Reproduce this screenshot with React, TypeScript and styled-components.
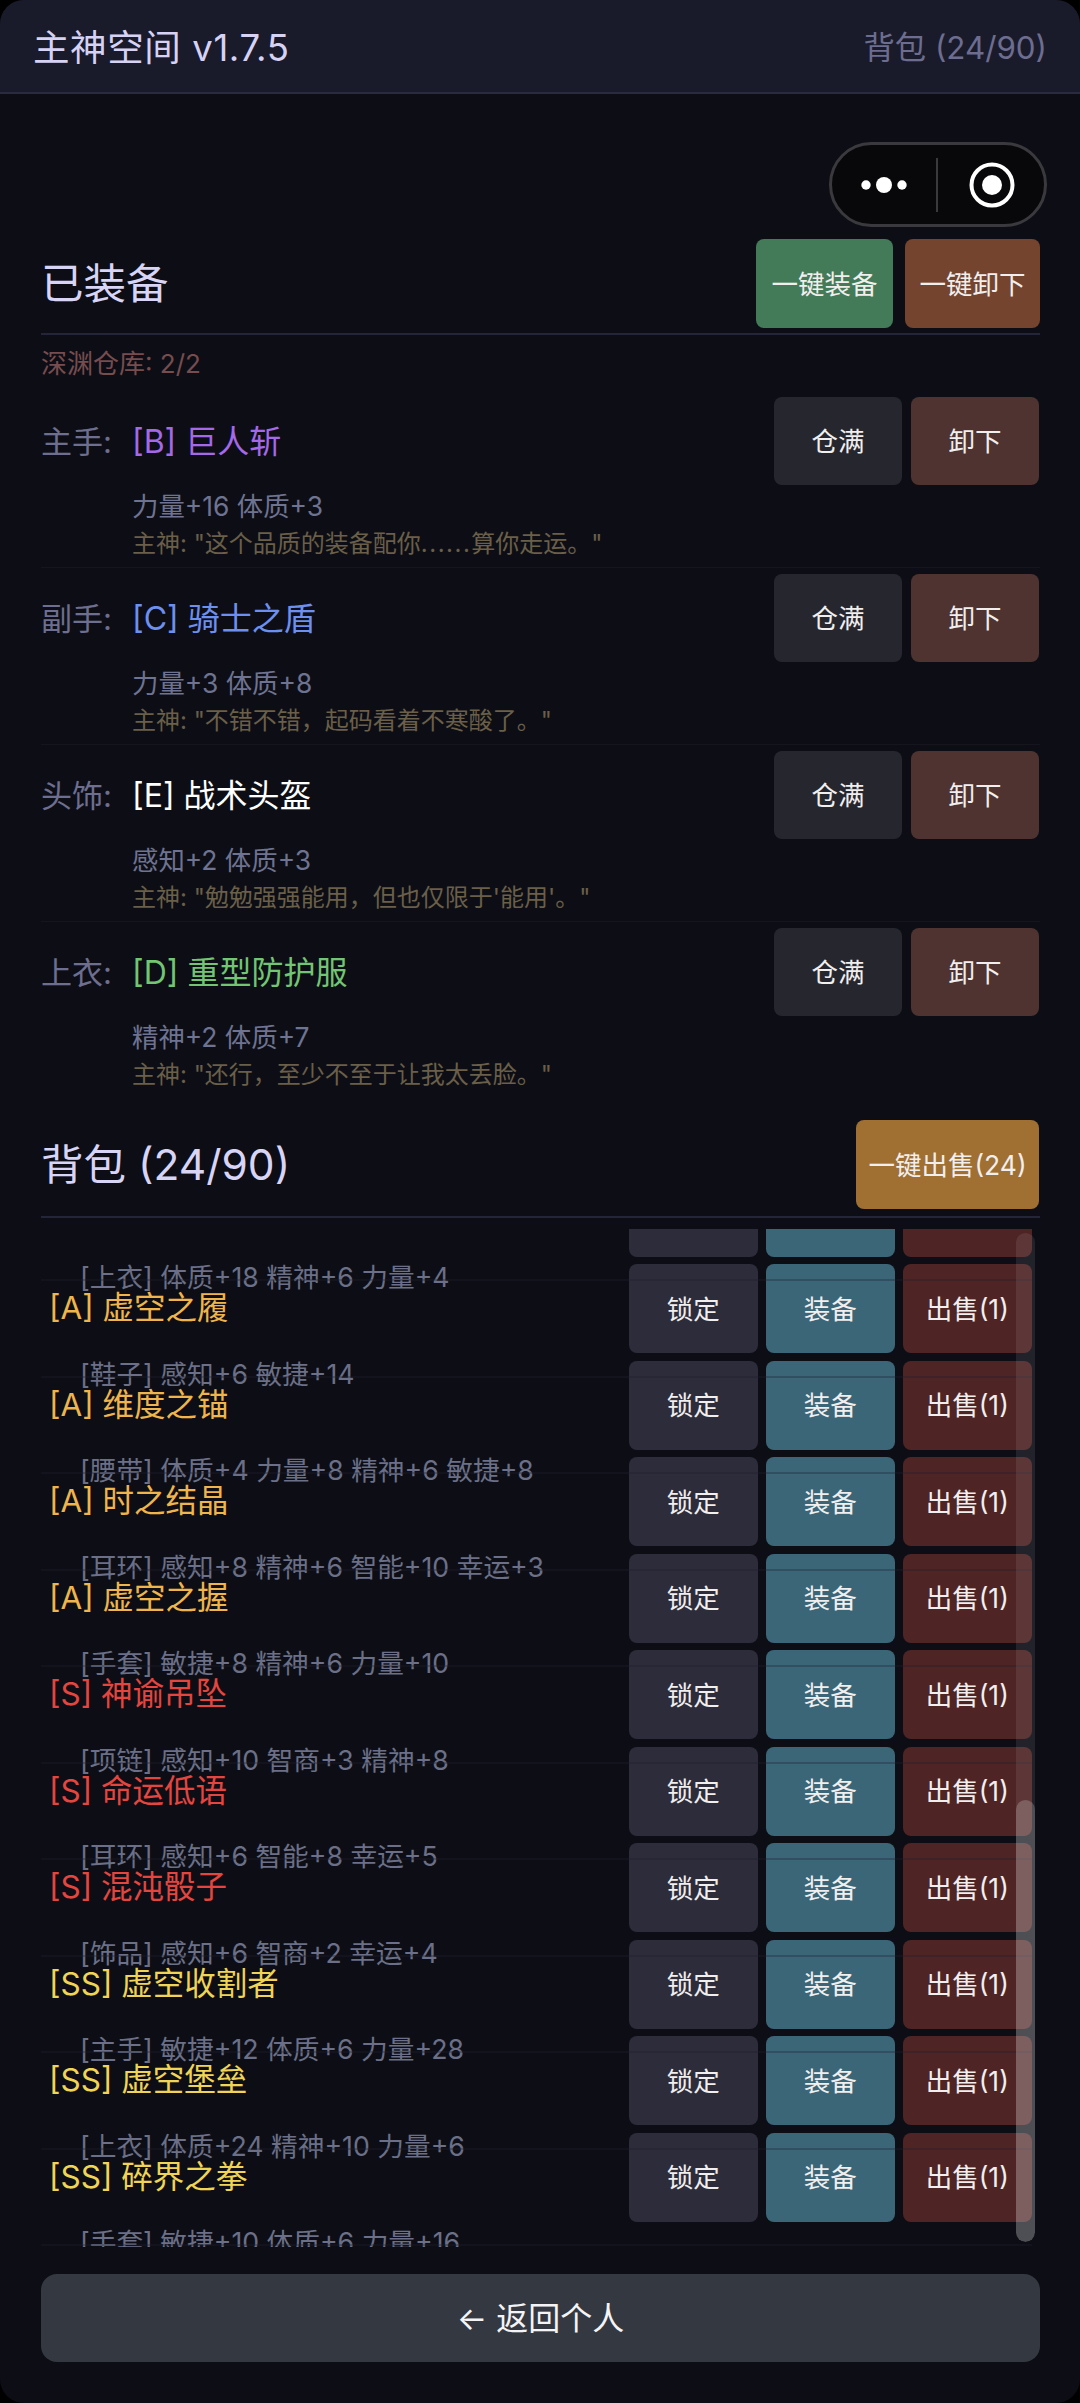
import React from "react";
import styled, { createGlobalStyle } from "styled-components";

const Global = createGlobalStyle`
  html, body { margin: 0; padding: 0; background: #000; }
  * { box-sizing: border-box; }
  body, button { font-family: Inter, "Noto Sans CJK SC", "Noto Sans", sans-serif; }
`;

const Screen = styled.div`
  position: relative;
  width: 1080px;
  height: 2403px;
  background: #0d0e15;
  border-radius: 24px;
  overflow: hidden;
`;

const TopBar = styled.header`
  height: 94px;
  padding: 0 33px 2px 33px;
  display: flex;
  align-items: center;
  justify-content: space-between;
  background: #1a1b2a;
  border-bottom: 2px solid #2a2a40;
`;

const AppTitle = styled.div`
  font-size: 36.5px;
  color: #d6d2f4;
  letter-spacing: 0.6px;
`;

const BagCount = styled.div`
  font-size: 31.3px;
  color: #6d6d90;
`;

const Capsule = styled.div`
  position: absolute;
  top: 142px;
  left: 829px;
  width: 218px;
  height: 85px;
  display: flex;
  align-items: center;
  background: #08080b;
  border: 3px solid #3a3a3e;
  border-radius: 43px;
`;

const CapsuleCell = styled.div`
  flex: 1;
  display: flex;
  justify-content: center;
  align-items: center;
  &:last-child { padding-left: 2px; }
`;

const CapsuleSplit = styled.div`
  width: 2px;
  height: 54px;
  background: #3a3a3e;
`;

const Content = styled.main`
  padding: 145px 40px 0 41px;
`;

const SectionHead = styled.div<{ $gap: number; $pad: number }>`
  display: flex;
  align-items: center;
  justify-content: space-between;
  padding-bottom: ${(p) => p.$pad}px;
  border-bottom: 2px solid #25253a;
  margin-top: ${(p) => p.$gap}px;
`;

const SectionTitle = styled.h2`
  margin: 0;
  padding-bottom: 6px;
  font-size: 42.5px;
  font-weight: 400;
  color: #d8d4f5;
`;

const HeadActions = styled.div`
  display: flex;
  gap: 12px;
`;

const ActionButton = styled.button<{ $bg: string; $w: number; $h: number }>`
  width: ${(p) => p.$w}px;
  height: ${(p) => p.$h}px;
  padding: 0 0 3px;
  border: 0;
  border-radius: 8px;
  background: ${(p) => p.$bg};
  color: #f1eeee;
  font-size: 26.5px;
  flex: none;
  white-space: nowrap;
`;

const AbyssNote = styled.div`
  font-size: 26px;
  line-height: 36px;
  color: #774c4e;
  margin: 11px 0 9px;
`;

const EquipRow = styled.section`
  padding: 6px 0;
  border-bottom: 1px solid #14151d;
  height: 177px;
  &:last-of-type { border-bottom: 0; }
`;

const EquipTop = styled.div`
  display: flex;
  align-items: center;
  justify-content: flex-start;
  height: 88px;
`;

const SlotLabel = styled.span`
  width: 91px;
  padding-bottom: 3px;
  font-size: 31px;
  color: #6e6e90;
  flex: none;
`;

const ItemName = styled.span<{ $color: string }>`
  padding-bottom: 5px;
  font-size: 32px;
  color: ${(p) => p.$color};
  white-space: nowrap;
`;

const RowActions = styled.div`
  margin-left: auto;
  display: flex;
  gap: 9px;
  padding-right: 1px;
`;

const StatLine = styled.div`
  margin: 3px 0 0 91px;
  font-size: 26.4px;
  line-height: 36px;
  color: #6f7392;
`;

const GodLine = styled.div`
  margin: 4px 0 0 91px;
  font-size: 24px;
  line-height: 32px;
  color: #6a5f48;
`;

const WideDots = styled.span`
  letter-spacing: 1.5px;
`;

const ListFrame = styled.div`
  position: relative;
  margin-top: 11px;
  height: 1018px;
`;

const ListClip = styled.div`
  height: 100%;
  overflow: hidden;
`;

const ListInner = styled.div`
  margin-top: -61.5px;
`;

const BagRow = styled.div`
  position: relative;
  display: flex;
  align-items: flex-start;
  height: 96.5px;
  padding: 0 8px 0 8px;
  &::after {
    content: "";
    position: absolute;
    left: 0;
    right: 8px;
    top: 15px;
    height: 2px;
    background: rgba(32, 32, 48, 0.32);
  }
`;

const BagInfo = styled.div`
  flex: 1;
  min-width: 0;
  margin-top: -2px;
`;

const BagStats = styled.div`
  margin-left: 31px;
  font-size: 26.7px;
  line-height: 30px;
  color: #6b7088;
  white-space: nowrap;
`;

const BagName = styled.div<{ $color: string }>`
  margin-top: 1px;
  font-size: 31.5px;
  line-height: 30px;
  color: ${(p) => p.$color};
  white-space: nowrap;
`;

const BagActions = styled.div`
  display: flex;
  gap: 7.5px;
`;

const ScrollTrack = styled.div`
  position: absolute;
  top: 4px;
  right: 5px;
  width: 19px;
  height: 1009px;
  border-radius: 10px;
  background: rgba(255, 255, 255, 0.09);
  overflow: hidden;
`;

const ScrollThumb = styled.div`
  position: absolute;
  top: 567px;
  left: 0;
  right: 0;
  bottom: 0;
  border-radius: 10px;
  background: rgba(255, 255, 255, 0.2);
`;

const BackButton = styled.button`
  display: block;
  width: 100%;
  height: 88px;
  padding: 0 0 4px;
  margin-top: 27px;
  border: 0;
  border-radius: 16px;
  background: #343840;
  color: #f4f4f6;
  font-size: 32px;
`;

const C = {
  A: "#efb54c",
  S: "#e5453f",
  SS: "#f0d455",
};

const equipped = [
  {
    slot: "主手:",
    name: "[B] 巨人斩",
    color: "#a468e8",
    stats: "力量+16 体质+3",
    god: <>主神: "这个品质的装备配你<WideDots>......</WideDots>算你走运。"</>,
  },
  { slot: "副手:", name: "[C] 骑士之盾", color: "#6d90f0", stats: "力量+3 体质+8", god: <>主神: "不错不错，起码看着不寒酸了。"</> },
  { slot: "头饰:", name: "[E] 战术头盔", color: "#ffffff", stats: "感知+2 体质+3", god: <>主神: "勉勉强强能用，但也仅限于'能用'。"</> },
  { slot: "上衣:", name: "[D] 重型防护服", color: "#72c572", stats: "精神+2 体质+7", god: <>主神: "还行，至少不至于让我太丢脸。"</> },
];

const bag = [
  { stats: "[上衣] 体质+18 精神+6 力量+4", name: "[A] 虚空之履", color: C.A },
  { stats: "[鞋子] 感知+6 敏捷+14", name: "[A] 维度之锚", color: C.A },
  { stats: "[腰带] 体质+4 力量+8 精神+6 敏捷+8", name: "[A] 时之结晶", color: C.A },
  { stats: "[耳环] 感知+8 精神+6 智能+10 幸运+3", name: "[A] 虚空之握", color: C.A },
  { stats: "[手套] 敏捷+8 精神+6 力量+10", name: "[S] 神谕吊坠", color: C.S },
  { stats: "[项链] 感知+10 智商+3 精神+8", name: "[S] 命运低语", color: C.S },
  { stats: "[耳环] 感知+6 智能+8 幸运+5", name: "[S] 混沌骰子", color: C.S },
  { stats: "[饰品] 感知+6 智商+2 幸运+4", name: "[SS] 虚空收割者", color: C.SS },
  { stats: "[主手] 敏捷+12 体质+6 力量+28", name: "[SS] 虚空堡垒", color: C.SS },
  { stats: "[上衣] 体质+24 精神+10 力量+6", name: "[SS] 碎界之拳", color: C.SS },
];

const LOCK_BG = "#2d2c3a";
const EQUIP_BG = "#3a6678";
const SELL_BG = "#4e2424";

export default function App() {
  return (
    <Screen>
      <Global />
      <TopBar>
        <AppTitle>主神空间 v1.7.5</AppTitle>
        <BagCount>背包 (24/90)</BagCount>
      </TopBar>

      <Capsule>
        <CapsuleCell>
          <svg width="56" height="20" viewBox="0 0 56 20">
            <circle cx="10" cy="10" r="4.7" fill="#fff" />
            <circle cx="28" cy="10" r="8" fill="#fff" />
            <circle cx="46" cy="10" r="4.7" fill="#fff" />
          </svg>
        </CapsuleCell>
        <CapsuleSplit />
        <CapsuleCell>
          <svg width="46" height="46" viewBox="0 0 46 46">
            <circle cx="23" cy="23" r="20.5" fill="none" stroke="#fff" strokeWidth="4" />
            <circle cx="23" cy="23" r="10" fill="#fff" />
          </svg>
        </CapsuleCell>
      </Capsule>

      <Content>
        <SectionHead $gap={0} $pad={5}>
          <SectionTitle>已装备</SectionTitle>
          <HeadActions>
            <ActionButton $bg="#437a58" $w={137} $h={89}>一键装备</ActionButton>
            <ActionButton $bg="#74442e" $w={135} $h={89}>一键卸下</ActionButton>
          </HeadActions>
        </SectionHead>
        <AbyssNote>深渊仓库: 2/2</AbyssNote>

        {equipped.map((it) => (
          <EquipRow key={it.slot}>
            <EquipTop>
              <SlotLabel>{it.slot}</SlotLabel>
              <ItemName $color={it.color}>{it.name}</ItemName>
              <RowActions>
                <ActionButton $bg="#26272e" $w={128} $h={88}>仓满</ActionButton>
                <ActionButton $bg="#4e3330" $w={128} $h={88}>卸下</ActionButton>
              </RowActions>
            </EquipTop>
            <StatLine>{it.stats}</StatLine>
            <GodLine>{it.god}</GodLine>
          </EquipRow>
        ))}

        <SectionHead $gap={21} $pad={7}>
          <SectionTitle>背包 (24/90)</SectionTitle>
          <RowActions>
            <ActionButton $bg="#a06f32" $w={183} $h={89}>一键出售(24)</ActionButton>
          </RowActions>
        </SectionHead>

        <ListFrame>
          <ListClip>
            <ListInner>
              <BagRow>
                <BagInfo />
                <BagActions>
                  <ActionButton $bg={LOCK_BG} $w={129.5} $h={89} />
                  <ActionButton $bg={EQUIP_BG} $w={129.5} $h={89} />
                  <ActionButton $bg={SELL_BG} $w={129.5} $h={89} />
                </BagActions>
              </BagRow>
              {bag.map((it, i) => (
                <BagRow key={i}>
                  <BagInfo>
                    <BagStats>{it.stats}</BagStats>
                    <BagName $color={it.color}>{it.name}</BagName>
                  </BagInfo>
                  <BagActions>
                    <ActionButton $bg={LOCK_BG} $w={129.5} $h={89}>锁定</ActionButton>
                    <ActionButton $bg={EQUIP_BG} $w={129.5} $h={89}>装备</ActionButton>
                    <ActionButton $bg={SELL_BG} $w={129.5} $h={89}>出售(1)</ActionButton>
                  </BagActions>
                </BagRow>
              ))}
              <BagRow>
                <BagInfo>
                  <BagStats>[手套] 敏捷+10 体质+6 力量+16</BagStats>
                </BagInfo>
              </BagRow>
            </ListInner>
          </ListClip>
          <ScrollTrack>
            <ScrollThumb />
          </ScrollTrack>
        </ListFrame>

        <BackButton>← 返回个人</BackButton>
      </Content>
    </Screen>
  );
}
